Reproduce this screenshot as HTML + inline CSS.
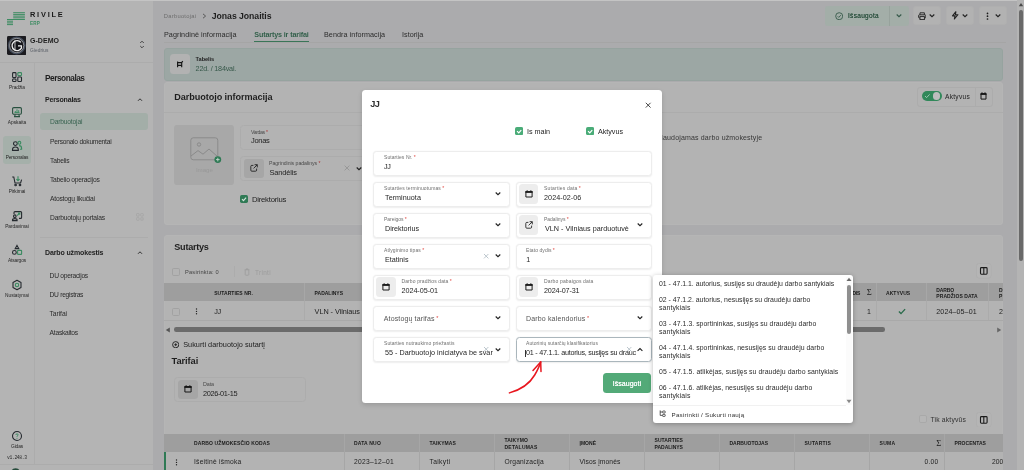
<!DOCTYPE html>
<html><head><meta charset="utf-8"><title>Rivile ERP</title>
<style>
*{box-sizing:border-box;margin:0;padding:0}
html,body{width:1024px;height:470px;overflow:hidden}
body{font-family:"Liberation Sans",sans-serif;background:#ababad;position:relative}
.a{position:absolute;display:block}
.t{position:absolute;white-space:nowrap}
#w{position:absolute;left:0;top:0;width:1024px;height:470px;overflow:hidden;will-change:transform}
</style></head><body>
<div id="w">
<div class="a" style="left:0px;top:0px;width:153px;height:470px;background:#b4b4b4;"></div>
<div class="a" style="left:0px;top:0px;width:1024px;height:1px;background:#c4c4c4;"></div>
<div class="a" style="left:0px;top:62px;width:153px;height:1px;background:#acacac;"></div>
<div class="a" style="left:34px;top:63px;width:1px;height:401px;background:#acacac;"></div>
<div class="a" style="left:0px;top:464px;width:153px;height:1px;background:#acacac;"></div>
<svg class="a" style="left:0px;top:0px;" width="30" height="30" viewBox="0 0 30 30"><rect x="13.2" y="12.2" width="11.7" height="1" fill="#3d8c62"/><rect x="13.2" y="13.9" width="11.7" height="1" fill="#3d8c62"/><rect x="13.2" y="15.6" width="11.7" height="1" fill="#3d8c62"/><rect x="13.2" y="17.3" width="11.7" height="1" fill="#3d8c62"/><rect x="7" y="19" width="17.9" height="1" fill="#3d8c62"/><rect x="7" y="20.7" width="6" height="1" fill="#3d8c62"/><rect x="7" y="22.4" width="6" height="1" fill="#3d8c62"/><rect x="7" y="24.1" width="6" height="1" fill="#3d8c62"/></svg>
<div class="t" style="left:30.00px;top:10px;font-size:7.4px;line-height:9px;color:#1a1a1a;font-weight:bold;letter-spacing:1.775px;">RIVILE</div>
<div class="t" style="left:30.00px;top:21px;font-size:4.6px;line-height:5px;color:#3d8c62;font-weight:bold;letter-spacing:0.180px;">ERP</div>
<svg class="a" style="left:7px;top:36px;" width="19.4" height="19" viewBox="0 0 19.4 19"><rect x="0" y="0" width="19.4" height="19" rx="1.5" fill="#1b1b1f"/><circle cx="9.7" cy="9.5" r="8.1" fill="none" stroke="#6f7f99" stroke-width="1.6" opacity=".5"/><circle cx="9.7" cy="9.5" r="7.1" fill="#15151a" stroke="#e0e0e0" stroke-width=".6"/><path d="M13.9 6.4A5 5 0 1 0 14.4 12.2V9.8H11" fill="none" stroke="#ededed" stroke-width="1.3"/><path d="M8 4.2V14.8" stroke="#ededed" stroke-width=".8"/></svg>
<div class="t" style="left:30.00px;top:37px;font-size:7px;line-height:7px;color:#1f1f1f;font-weight:bold;letter-spacing:0.037px;">G-DEMO</div>
<div class="t" style="left:30.00px;top:48px;font-size:4.8px;line-height:5px;color:#5b6068;letter-spacing:0.078px;">Giedrius</div>
<svg class="a" style="left:139px;top:38.5px;" width="6" height="11" viewBox="0 0 6 11"><path d="M1.2 4 3 2.2 4.8 4M1.2 7 3 8.8 4.8 7" fill="none" stroke="#2a2a2a" stroke-width=".8"/></svg>
<div class="a" style="left:3px;top:136px;width:28px;height:27.5px;background:#a5b0aa;border-radius:3px;"></div>
<div class="t" style="left:9.05px;top:85px;font-size:4.8px;line-height:5px;color:#262626;letter-spacing:-0.054px;">Pradžia</div>
<div class="t" style="left:7.80px;top:120px;font-size:4.8px;line-height:5px;color:#262626;letter-spacing:-0.001px;">Apskaita</div>
<div class="t" style="left:5.85px;top:155px;font-size:4.8px;line-height:5px;color:#262626;letter-spacing:-0.171px;">Personalas</div>
<div class="t" style="left:8.70px;top:189px;font-size:4.8px;line-height:5px;color:#262626;letter-spacing:-0.059px;">Pirkimai</div>
<div class="t" style="left:5.20px;top:224px;font-size:4.8px;line-height:5px;color:#262626;letter-spacing:-0.041px;">Pardavimai</div>
<div class="t" style="left:8.00px;top:258px;font-size:4.8px;line-height:5px;color:#262626;letter-spacing:-0.118px;">Atsargos</div>
<div class="t" style="left:5.10px;top:293px;font-size:4.8px;line-height:5px;color:#262626;letter-spacing:-0.021px;">Nustatymai</div>
<div class="t" style="left:11.05px;top:444px;font-size:4.8px;line-height:5px;color:#262626;letter-spacing:-0.128px;">Gidas</div>
<div class="t" style="left:7.00px;top:455px;font-size:4.7px;line-height:5px;color:#2c2c2c;font-family:'Liberation Mono',monospace;letter-spacing:-0.345px;">v1.248.3</div>
<svg class="a" style="left:11px;top:71px;" width="12" height="12" viewBox="-1 -1 12 12"><g fill="none" stroke-width="1.1"><rect x=".6" y=".6" width="3.4" height="5" rx=".8" stroke="#252a2f"/><rect x="5.8" y=".6" width="3.7" height="3" rx=".8" stroke="#3a8a60"/><rect x=".6" y="7" width="3.4" height="2.5" rx=".8" stroke="#252a2f"/><rect x="5.8" y="5" width="3.7" height="4.5" rx=".8" stroke="#252a2f"/></g></svg>
<svg class="a" style="left:11px;top:105.6px;" width="12" height="12" viewBox="-1 -1 12 12"><g fill="none" stroke-width="1.1"><rect x=".6" y=".6" width="8.8" height="6.6" rx="1.2" stroke="#28503f"/><path d="M2.6 9.6 3.2 7.4M7.4 9.6 6.8 7.4M2 9.6H8" stroke="#28503f"/><path d="M3.3 5.4V4M5 5.4V2.3M6.7 5.4V3.2M2.5 5.6H7.5" stroke="#3a8a60" stroke-width="1"/></g></svg>
<svg class="a" style="left:11px;top:140.3px;" width="12" height="12" viewBox="-1 -1 12 12"><g fill="none" stroke-width="1.1"><circle cx="3.4" cy="2.6" r="1.9" stroke="#252a2f"/><path d="M.5 9.4V8.4Q.5 6 3.4 6 6.3 6 6.3 8.4V9.4Z" stroke="#252a2f"/><circle cx="7.4" cy="1.8" r="1.4" stroke="#3a8a60"/><path d="M7 4.6Q9.6 4.6 9.6 7.2V8.2H8" stroke="#3a8a60"/></g></svg>
<svg class="a" style="left:11px;top:175px;" width="12" height="12" viewBox="-1 -1 12 12"><g fill="none" stroke-width="1.1"><path d="M.2 1H1.8L3 7H8.6L9.6 3.6" stroke="#252a2f"/><circle cx="3.6" cy="9" r=".8" stroke="#252a2f"/><circle cx="8" cy="9" r=".8" stroke="#252a2f"/><path d="M6 .2V4.6M4.4 3.2 6 4.8 7.6 3.2" stroke="#3a8a60"/></g></svg>
<svg class="a" style="left:11px;top:209.6px;" width="12" height="12" viewBox="-1 -1 12 12"><g fill="none" stroke-width="1.1"><path d="M2 3V1.6Q2 .6 3 .6H8.6Q9.6 .6 9.6 1.6V6.4Q9.6 7.4 8.6 7.4H7" stroke="#252a2f"/><circle cx="2.8" cy="5.2" r="1.3" stroke="#252a2f"/><path d="M.5 9.6V9Q.5 7.6 2.8 7.6 5.1 7.6 5.1 9V9.6Z" stroke="#252a2f"/><path d="M5 4.6 7.8 2M6 2H7.8V3.8" stroke="#3a8a60"/></g></svg>
<svg class="a" style="left:11px;top:244px;" width="12" height="12" viewBox="-1 -1 12 12"><g fill="none" stroke-width="1.1"><path d="M5 .4 6.8 3.6H3.2Z" stroke="#252a2f"/><circle cx="2.4" cy="7.4" r="1.9" stroke="#252a2f"/><rect x="5.6" y="5.4" width="4" height="4" rx=".7" stroke="#3a8a60"/></g></svg>
<svg class="a" style="left:11px;top:278.8px;" width="12" height="12" viewBox="-1 -1 12 12"><g fill="none" stroke-width="1.1"><path d="M5 .3 9 2.5V7.5L5 9.7 1 7.5V2.5Z" stroke="#252a2f" stroke-linejoin="round"/><circle cx="5" cy="5" r="1.7" stroke="#3a8a60"/></g></svg>
<svg class="a" style="left:11px;top:429.8px;" width="12" height="12" viewBox="-1 -1 12 12"><circle cx="5" cy="5" r="4.5" fill="none" stroke="#252a2f" stroke-width="1.1"/><path d="M3.9 4Q3.9 2.8 5 2.8 6.1 2.8 6.1 3.9 6.1 4.6 5 5.2V5.9" fill="none" stroke="#3a8a60" stroke-width=".9"/><circle cx="5" cy="7.2" r=".5" fill="#3a8a60"/></svg>
<svg class="a" style="left:11px;top:468px;" width="10" height="2" viewBox="0 0 10 2"><ellipse cx="4.6" cy="3.5" rx="4" ry="3.3" fill="#254a3a"/></svg>
<div class="t" style="left:45.00px;top:73px;font-size:8.3px;line-height:10px;color:#1e1e1e;font-weight:bold;letter-spacing:-0.479px;">Personalas</div>
<div class="t" style="left:45.00px;top:96px;font-size:7px;line-height:7px;color:#1e1e1e;font-weight:bold;letter-spacing:-0.176px;">Personalas</div>
<svg class="a" style="left:136.5px;top:96.5px;" width="6" height="5" viewBox="0 0 6 5"><path d="M1 3.8 3 1.8 5 3.8" fill="none" stroke="#222" stroke-width=".9"/></svg>
<div class="a" style="left:39.7px;top:113.3px;width:108.6px;height:17px;background:#a3aea8;border-radius:3px;"></div>
<div class="t" style="left:50.00px;top:118px;font-size:6.7px;line-height:7px;color:#386350;letter-spacing:-0.179px;">Darbuotojai</div>
<div class="t" style="left:50.00px;top:138px;font-size:6.7px;line-height:7px;color:#2b2b2b;letter-spacing:-0.259px;">Personalo dokumentai</div>
<div class="t" style="left:50.00px;top:157px;font-size:6.7px;line-height:7px;color:#2b2b2b;letter-spacing:-0.208px;">Tabelis</div>
<div class="t" style="left:50.00px;top:176px;font-size:6.7px;line-height:7px;color:#2b2b2b;letter-spacing:-0.224px;">Tabelio operacijos</div>
<div class="t" style="left:50.00px;top:195px;font-size:6.7px;line-height:7px;color:#2b2b2b;letter-spacing:-0.201px;">Atostogų likučiai</div>
<div class="t" style="left:50.00px;top:214px;font-size:6.7px;line-height:7px;color:#2b2b2b;letter-spacing:-0.183px;">Darbuotojų portalas</div>
<svg class="a" style="left:135.9px;top:212.5px;" width="8" height="8" viewBox="0 0 8 8"><g fill="none" stroke="#a5a5a5" stroke-width=".7"><rect x=".5" y=".5" width="2.7" height="2.7" rx=".8"/><rect x="4.6" y=".5" width="2.7" height="2.7" rx=".8"/><rect x=".5" y="4.6" width="2.7" height="2.7" rx=".8"/><rect x="4.6" y="4.6" width="2.7" height="2.7" rx=".8"/></g></svg>
<div class="a" style="left:39.7px;top:237px;width:108.6px;height:1px;background:#acacac;"></div>
<div class="t" style="left:45.00px;top:249px;font-size:7px;line-height:7px;color:#1e1e1e;font-weight:bold;letter-spacing:-0.125px;">Darbo užmokestis</div>
<svg class="a" style="left:136.5px;top:249.7px;" width="6" height="5" viewBox="0 0 6 5"><path d="M1 3.8 3 1.8 5 3.8" fill="none" stroke="#222" stroke-width=".9"/></svg>
<div class="t" style="left:49.60px;top:272px;font-size:6.7px;line-height:7px;color:#2b2b2b;letter-spacing:-0.283px;">DU operacijos</div>
<div class="t" style="left:49.60px;top:291px;font-size:6.7px;line-height:7px;color:#2b2b2b;letter-spacing:-0.303px;">DU registras</div>
<div class="t" style="left:49.60px;top:310px;font-size:6.7px;line-height:7px;color:#2b2b2b;letter-spacing:-0.068px;">Tarifai</div>
<div class="t" style="left:49.60px;top:329px;font-size:6.7px;line-height:7px;color:#2b2b2b;letter-spacing:-0.251px;">Ataskaitos</div>
<div class="t" style="left:163.80px;top:13px;font-size:5.8px;line-height:6px;color:#6e6e6e;letter-spacing:0.258px;">Darbuotojai</div>
<svg class="a" style="left:200.5px;top:12.5px;" width="6" height="6" viewBox="0 0 6 6"><path d="M2 .9 4.6 3.05 2 5.2" fill="none" stroke="#444" stroke-width=".8"/></svg>
<div class="t" style="left:211.80px;top:11px;font-size:8.7px;line-height:10px;color:#1e1e1e;font-weight:bold;letter-spacing:-0.046px;">Jonas Jonaitis</div>
<div class="t" style="left:164.00px;top:30px;font-size:7.2px;line-height:9px;color:#2b2b2b;letter-spacing:0.066px;">Pagrindinė informacija</div>
<div class="t" style="left:254.30px;top:30px;font-size:7.2px;line-height:9px;color:#33604b;font-weight:bold;letter-spacing:-0.143px;">Sutartys ir tarifai</div>
<div class="a" style="left:164px;top:41.7px;width:842px;height:0.8px;background:#a5a5a5;"></div>
<div class="a" style="left:254px;top:41.4px;width:55px;height:1.1px;background:#3a7558;"></div>
<div class="t" style="left:324.00px;top:30px;font-size:7.2px;line-height:9px;color:#2b2b2b;letter-spacing:0.070px;">Bendra informacija</div>
<div class="t" style="left:402.00px;top:30px;font-size:7.2px;line-height:9px;color:#2b2b2b;letter-spacing:0.024px;">Istorija</div>
<div class="a" style="left:825px;top:6px;width:84px;height:19.5px;background:#a3aea8;border-radius:3px;"></div>
<div class="a" style="left:888.5px;top:6px;width:1px;height:19.5px;background:#97a29c;"></div>
<svg class="a" style="left:834.5px;top:11.5px;" width="8.4" height="8.4" viewBox="0 0 8.4 8.4"><circle cx="4.2" cy="4.2" r="3.5" fill="none" stroke="#35594a" stroke-width=".9"/><path d="M2.7 4.3 3.8 5.4 5.8 3.2" fill="none" stroke="#35594a" stroke-width=".9"/></svg>
<div class="t" style="left:848.00px;top:12px;font-size:6.5px;line-height:7px;color:#2f5442;letter-spacing:0.313px;text-shadow:0 0 .4px #2f5442;">Išsaugota</div>
<svg class="a" style="left:896px;top:13.2px;" width="6" height="5" viewBox="0 0 6 5"><path d="M.7 1.5 3 3.7 5.3 1.5" fill="none" stroke="#35594a" stroke-width="1.1"/></svg>
<div class="a" style="left:913px;top:6px;width:28px;height:19px;background:#b2b2b2;border:1px solid #afafaf;border-radius:3px;"></div>
<div class="a" style="left:946px;top:6px;width:27.5px;height:19px;background:#b2b2b2;border:1px solid #afafaf;border-radius:3px;"></div>
<div class="a" style="left:979px;top:6px;width:28px;height:19px;background:#b2b2b2;border:1px solid #afafaf;border-radius:3px;"></div>
<svg class="a" style="left:917.5px;top:11.5px;" width="8.4" height="8.4" viewBox="0 0 8.4 8.4"><g fill="none" stroke="#222" stroke-width=".9"><path d="M2 2.8V.8H6.4V2.8"/><rect x=".6" y="2.8" width="7.2" height="3.2" rx=".8"/><rect x="2" y="4.6" width="4.4" height="3" fill="#b4b4b4"/></g></svg>
<svg class="a" style="left:929.3px;top:13.2px;" width="6" height="5" viewBox="0 0 6 5"><path d="M.7 1.5 3 3.7 5.3 1.5" fill="none" stroke="#222" stroke-width="1.1"/></svg>
<svg class="a" style="left:951.2px;top:11.3px;" width="8.4" height="8.8" viewBox="0 0 8.4 8.8"><path d="M4.9 .7 1.5 4.9H4L3.4 8 6.9 3.7H4.4Z" fill="none" stroke="#222" stroke-width="1.1" stroke-linejoin="round"/></svg>
<svg class="a" style="left:962.3px;top:13.2px;" width="6" height="5" viewBox="0 0 6 5"><path d="M.7 1.5 3 3.7 5.3 1.5" fill="none" stroke="#222" stroke-width="1.1"/></svg>
<svg class="a" style="left:986px;top:11.5px;" width="3" height="8.4" viewBox="0 0 3 8.4"><circle cx="1.5" cy="1.4" r=".85" fill="#1a1a1a"/><circle cx="1.5" cy="4.2" r=".85" fill="#1a1a1a"/><circle cx="1.5" cy="7" r=".85" fill="#1a1a1a"/></svg>
<svg class="a" style="left:994.8px;top:13.2px;" width="6" height="5" viewBox="0 0 6 5"><path d="M.7 1.5 3 3.7 5.3 1.5" fill="none" stroke="#222" stroke-width="1.1"/></svg>
<div class="a" style="left:164px;top:48px;width:839px;height:33px;background:#9ca7a4;border:1px solid #96a39f;border-radius:3px;"></div>
<div class="a" style="left:170px;top:54.3px;width:20px;height:20px;background:#b2b2b2;border-radius:3.5px;"></div>
<svg class="a" style="left:176px;top:60.2px;" width="8" height="8" viewBox="0 0 8 8"><g fill="none" stroke="#161616" stroke-width="1.15"><path d="M1.6 1.6V7.2M1.4 2.6H5.6L6.8 1.1M5.7 2.6V7.2M1.6 5.4H5.7"/></g></svg>
<div class="t" style="left:195.60px;top:56px;font-size:5.7px;line-height:6px;color:#242424;font-weight:bold;letter-spacing:-0.088px;">Tabelis</div>
<div class="t" style="left:195.60px;top:64px;font-size:7.2px;line-height:9px;color:#37594a;letter-spacing:-0.188px;">22d. / 184val.</div>
<div class="a" style="left:164px;top:81.6px;width:839px;height:143.4px;background:#b3b3b3;border:1px solid #b5b5b5;border-radius:3px;"></div>
<div class="t" style="left:174.30px;top:92px;font-size:9.1px;line-height:10px;color:#1e1e1e;font-weight:bold;letter-spacing:-0.064px;">Darbuotojo informacija</div>
<div class="a" style="left:164px;top:111.5px;width:839px;height:1px;background:#acacac;"></div>
<div class="a" style="left:917px;top:86.5px;width:75.5px;height:20px;background:#b3b3b3;border:1px solid #acacac;border-radius:3px;"></div>
<div class="a" style="left:922px;top:91px;width:20px;height:10px;background:#31885a;border-radius:5px;"></div>
<div class="a" style="left:932.5px;top:92.2px;width:7.6px;height:7.6px;background:#bdbdbd;border-radius:3.8px;"></div>
<svg class="a" style="left:924px;top:93px;" width="7" height="6" viewBox="0 0 7 6"><path d="M1 3 2.6 4.6 5.6 1.4" fill="none" stroke="#b9d6c6" stroke-width=".8"/></svg>
<div class="t" style="left:945.00px;top:93px;font-size:6.6px;line-height:7px;color:#1e1e1e;letter-spacing:0.270px;">Aktyvus</div>
<div class="a" style="left:974.5px;top:86.5px;width:1px;height:20px;background:#acacac;"></div>
<svg class="a" style="left:980.4px;top:92px;" width="7" height="8" viewBox="0 0 7 8"><path d="M1 1.7H6V7.1H1Z" fill="none" stroke="#161616" stroke-width="1" stroke-linejoin="round"/><rect x=".5" y="1.2" width="6" height="1.7" fill="#161616"/><rect x="1.5" y=".3" width="1" height="1.2" fill="#161616"/><rect x="4.5" y=".3" width="1" height="1.2" fill="#161616"/></svg>
<div class="a" style="left:174px;top:125px;width:60px;height:60px;background:#a8a8a8;border-radius:3px;"></div>
<svg class="a" style="left:189.5px;top:136.5px;" width="32" height="28" viewBox="0 0 32 28"><g fill="none" stroke="#8a8a8a" stroke-width="1"><rect x=".8" y=".8" width="27" height="22" rx="2.5"/><circle cx="9" cy="7.5" r="1.7"/><path d="M1 19 8 13.6 13 17.2 19 12 27.6 19.6"/></g><circle cx="27.8" cy="22.6" r="3.4" fill="#2f7a55"/><path d="M26 22.6H29.6M27.8 20.8V24.4" stroke="#c4d8cd" stroke-width=".9"/></svg>
<div class="t" style="left:195.90px;top:166px;font-size:6.2px;line-height:7px;color:#989898;letter-spacing:-0.046px;">Image</div>
<div class="a" style="left:240.2px;top:125.3px;width:200px;height:25px;background:#b3b3b3;border:1px solid #acacac;border-radius:3.5px;"></div>
<div class="t" style="left:251.00px;top:129px;font-size:5.2px;line-height:6px;color:#4a4a4a;letter-spacing:-0.382px;">Vardas</div>
<div class="t" style="left:266.00px;top:129px;font-size:5px;line-height:6px;color:#a33;">*</div>
<div class="t" style="left:251.00px;top:136px;font-size:7.5px;line-height:9px;color:#1e1e1e;letter-spacing:-0.303px;">Jonas</div>
<div class="a" style="left:240.2px;top:156.4px;width:200px;height:25px;background:#b3b3b3;border:1px solid #acacac;border-radius:3.5px;"></div>
<div class="a" style="left:244.3px;top:158.8px;width:19.4px;height:19.6px;background:#a6a6a6;border-radius:3px;"></div>
<svg class="a" style="left:249.8px;top:163.6px;" width="8" height="8" viewBox="0 0 8 8"><g fill="none" stroke="#1b1b1b" stroke-width=".85"><path d="M3.4 1.4H1.8Q.8 1.4 .8 2.4V6.2Q.8 7.2 1.8 7.2H5.6Q6.6 7.2 6.6 6.2V4.6"/><path d="M4.6 .7H7.3V3.4M7.2 .8 3.6 4.4"/></g></svg>
<div class="t" style="left:269.00px;top:160px;font-size:5.2px;line-height:6px;color:#4a4a4a;letter-spacing:-0.045px;">Pagrindinis padalinys</div>
<div class="t" style="left:318.60px;top:160px;font-size:5px;line-height:6px;color:#a33;">*</div>
<div class="t" style="left:269.50px;top:168px;font-size:7.4px;line-height:9px;color:#1e1e1e;letter-spacing:-0.136px;">Sandėlis</div>
<svg class="a" style="left:344px;top:165.4px;" width="6" height="6" viewBox="0 0 6 6"><path d="M.6 .6 5.4 5.4M5.4 .6 .6 5.4" stroke="#979797" stroke-width=".95"/></svg>
<svg class="a" style="left:355.5px;top:165.8px;" width="6" height="5" viewBox="0 0 6 5"><path d="M.7 1.5 3 3.7 5.3 1.5" fill="none" stroke="#222" stroke-width="1.1"/></svg>
<svg class="a" style="left:240.1px;top:195.1px;" width="8" height="8" viewBox="0 0 7.6 7.6"><rect x="0" y="0" width="7.6" height="7.6" rx="1.6" fill="#2f7a55"/><path d="M1.9 3.9 3.3 5.3 5.8 2.5" fill="none" stroke="#d3e3da" stroke-width="1.1"/></svg>
<div class="t" style="left:251.90px;top:195px;font-size:7.7px;line-height:9px;color:#1e1e1e;letter-spacing:-0.218px;">Direktorius</div>
<div class="t" style="left:657.80px;top:134px;font-size:7px;line-height:7px;color:#363636;letter-spacing:0.161px;">Naudojamas darbo užmokestyje</div>
<div class="a" style="left:164px;top:235.4px;width:839px;height:240px;background:#b3b3b3;border:1px solid #b5b5b5;border-radius:3px;"></div>
<div class="t" style="left:174.30px;top:242px;font-size:9.1px;line-height:10px;color:#1e1e1e;font-weight:bold;letter-spacing:-0.252px;">Sutartys</div>
<div class="a" style="left:172px;top:268px;width:8px;height:8px;border:1px solid #a2a2a2;border-radius:1.6px;"></div>
<div class="t" style="left:185.00px;top:269px;font-size:5.7px;line-height:6px;color:#444;letter-spacing:0.203px;">Pasirinkta: 0</div>
<div class="a" style="left:234.4px;top:266px;width:1px;height:11px;background:#acacac;"></div>
<svg class="a" style="left:243.8px;top:268px;" width="6" height="8" viewBox="0 0 6 8"><g fill="none" stroke="#9a9a9a" stroke-width=".7"><path d="M.6 1.8H5.4M2.2 1.8V.8H3.8V1.8M1.2 1.8V6.6Q1.2 7.2 1.8 7.2H4.2Q4.8 7.2 4.8 6.6V1.8"/></g></svg>
<div class="t" style="left:255.00px;top:269px;font-size:6.4px;line-height:7px;color:#9c9c9c;letter-spacing:0.336px;">Trinti</div>
<svg class="a" style="left:976px;top:263.4px;" width="15.6" height="15.6" viewBox="0 0 15.6 15.6"><rect x=".4" y=".4" width="14.8" height="14.8" rx="3" fill="#b5b5b5" stroke="#adadad" stroke-width=".8"/><rect x="4.5" y="4.6" width="6.6" height="6.6" rx=".9" fill="none" stroke="#1b1b1b" stroke-width="1.1"/><path d="M7.8 4.8V11" stroke="#1b1b1b" stroke-width="1.1"/></svg>
<div class="a" style="left:164px;top:283.3px;width:839px;height:17.5px;background:#9e9e9e;"></div>
<div class="t" style="left:214.20px;top:290px;font-size:5px;line-height:6px;color:#1b1b1b;font-weight:bold;letter-spacing:0.064px;">SUTARTIES NR.</div>
<div class="t" style="left:314.60px;top:290px;font-size:5px;line-height:6px;color:#1b1b1b;font-weight:bold;letter-spacing:-0.013px;">PADALINYS</div>
<div class="a" style="left:304px;top:283px;width:1px;height:18px;background:#a7a7a7;"></div>
<div class="a" style="left:304px;top:301px;width:1px;height:19px;background:#ababab;"></div>
<div class="a" style="left:875.6px;top:283px;width:1px;height:18px;background:#a7a7a7;"></div>
<div class="a" style="left:875.6px;top:301px;width:1px;height:19px;background:#ababab;"></div>
<div class="a" style="left:925.8px;top:283px;width:1px;height:18px;background:#a7a7a7;"></div>
<div class="a" style="left:925.8px;top:301px;width:1px;height:19px;background:#ababab;"></div>
<div class="a" style="left:988px;top:283px;width:1px;height:18px;background:#a7a7a7;"></div>
<div class="a" style="left:988px;top:301px;width:1px;height:19px;background:#ababab;"></div>
<div class="a" style="left:164px;top:320px;width:839px;height:1px;background:#a9a9a9;"></div>
<div class="t" style="left:852.60px;top:290px;font-size:5px;line-height:6px;color:#1b1b1b;font-weight:bold;letter-spacing:-0.312px;">DIS</div>
<div class="t" style="left:866.70px;top:287px;font-size:8.6px;line-height:10px;color:#1b1b1b;font-family:'Liberation Serif',serif;">Σ</div>
<div class="t" style="left:886.00px;top:290px;font-size:5px;line-height:6px;color:#1b1b1b;font-weight:bold;letter-spacing:0.044px;">AKTYVUS</div>
<div class="t" style="left:936.30px;top:287px;font-size:5px;line-height:6px;color:#1b1b1b;font-weight:bold;letter-spacing:-0.147px;">DARBO</div>
<div class="t" style="left:936.30px;top:293px;font-size:5px;line-height:6px;color:#1b1b1b;font-weight:bold;letter-spacing:0.087px;">PRADŽIOS DATA</div>
<div class="t" style="left:999.00px;top:287px;font-size:5px;line-height:6px;color:#1b1b1b;font-weight:bold;letter-spacing:-0.111px;">D</div>
<div class="t" style="left:999.00px;top:293px;font-size:5px;line-height:6px;color:#1b1b1b;font-weight:bold;letter-spacing:0.065px;">P</div>
<div class="a" style="left:172px;top:308.2px;width:8px;height:8px;border:1px solid #a2a2a2;border-radius:1.6px;"></div>
<svg class="a" style="left:195px;top:308.4px;" width="3" height="7" viewBox="0 0 3 7"><circle cx="1.5" cy="1" r=".7" fill="#222"/><circle cx="1.5" cy="3.4" r=".7" fill="#222"/><circle cx="1.5" cy="5.8" r=".7" fill="#222"/></svg>
<div class="t" style="left:214.20px;top:307px;font-size:7.3px;line-height:9px;color:#1e1e1e;letter-spacing:-0.250px;">JJ</div>
<div class="t" style="left:314.60px;top:307px;font-size:7.3px;line-height:9px;color:#1e1e1e;letter-spacing:-0.052px;">VLN - Vilniaus</div>
<div class="t" style="left:867.00px;top:308px;font-size:7px;line-height:7px;color:#1e1e1e;">1</div>
<svg class="a" style="left:898.3px;top:307.6px;" width="8" height="7" viewBox="0 0 8 7"><path d="M.9 3.6 3 5.6 7.1 1.1" fill="none" stroke="#2a6b4b" stroke-width="1.35"/></svg>
<div class="t" style="left:936.30px;top:308px;font-size:7.1px;line-height:8px;color:#1e1e1e;letter-spacing:0.101px;">2024–05–01</div>
<div class="t" style="left:999.00px;top:308px;font-size:7.1px;line-height:8px;color:#1e1e1e;">2</div>
<svg class="a" style="left:165.3px;top:326.6px;" width="6" height="6" viewBox="0 0 6 6"><path d="M4.8 .5V5.5L.8 3Z" fill="#555"/></svg>
<div class="a" style="left:173.5px;top:327.4px;width:711.5px;height:4.4px;background:#6b6b6b;border-radius:2.2px;"></div>
<svg class="a" style="left:995.6px;top:326.6px;" width="6" height="6" viewBox="0 0 6 6"><path d="M1.2 .5V5.5L5.2 3Z" fill="#666"/></svg>
<svg class="a" style="left:172px;top:341px;" width="7.4" height="7.4" viewBox="0 0 7.4 7.4"><circle cx="3.7" cy="3.7" r="3.1" fill="none" stroke="#1e1e1e" stroke-width=".9"/><path d="M3.7 2.3V5.1M2.3 3.7H5.1" stroke="#1e1e1e" stroke-width=".9"/></svg>
<div class="t" style="left:183.20px;top:340px;font-size:7.3px;line-height:9px;color:#1c1c1c;letter-spacing:0.025px;">Sukurti darbuotojo sutartį</div>
<div class="t" style="left:171.60px;top:356px;font-size:9.3px;line-height:10px;color:#1e1e1e;font-weight:bold;letter-spacing:-0.088px;">Tarifai</div>
<div class="a" style="left:174.2px;top:377px;width:132.2px;height:24.6px;background:#b3b3b3;border:1px solid #acacac;border-radius:3.5px;"></div>
<div class="a" style="left:178px;top:379.6px;width:19.6px;height:19.5px;background:#a6a6a6;border-radius:3.5px;"></div>
<svg class="a" style="left:183.9px;top:385.2px;" width="8" height="8" viewBox="0 0 8 8"><path d="M.9 1.6H7.1V7H.9Z" fill="none" stroke="#161616" stroke-width="1"/><rect x=".4" y="1" width="7.2" height="1.9" fill="#161616"/><rect x="1.6" y=".3" width="1.1" height="1" fill="#161616"/><rect x="5.3" y=".3" width="1.1" height="1" fill="#161616"/></svg>
<div class="t" style="left:203.00px;top:381px;font-size:5.4px;line-height:6px;color:#4a4a4a;letter-spacing:-0.102px;">Data</div>
<div class="t" style="left:203.00px;top:389px;font-size:7.4px;line-height:9px;color:#1e1e1e;letter-spacing:-0.365px;">2026-01-15</div>
<div class="a" style="left:918.8px;top:415.2px;width:7.8px;height:7.8px;background:#b6b6b6;border:1px solid #a9a9a9;border-radius:1.8px;"></div>
<div class="t" style="left:930.50px;top:416px;font-size:6.8px;line-height:7px;color:#333;letter-spacing:0.159px;">Tik aktyvūs</div>
<svg class="a" style="left:976px;top:411.5px;" width="15.6" height="15.6" viewBox="0 0 15.6 15.6"><rect x=".4" y=".4" width="14.8" height="14.8" rx="3" fill="#b5b5b5" stroke="#adadad" stroke-width=".8"/><rect x="4.5" y="4.6" width="6.6" height="6.6" rx=".9" fill="none" stroke="#1b1b1b" stroke-width="1.1"/><path d="M7.8 4.8V11" stroke="#1b1b1b" stroke-width="1.1"/></svg>
<div class="a" style="left:164px;top:434px;width:839px;height:18px;background:#9e9e9e;"></div>
<div class="a" style="left:164px;top:452px;width:839px;height:18px;background:#b3b3b3;"></div>
<div class="a" style="left:164px;top:452px;width:1.6px;height:18px;background:#2f7a55;"></div>
<div class="t" style="left:194.00px;top:440px;font-size:5px;line-height:6px;color:#1b1b1b;font-weight:bold;letter-spacing:0.134px;">DARBO UŽMOKESČIO KODAS</div>
<div class="t" style="left:354.00px;top:440px;font-size:5px;line-height:6px;color:#1b1b1b;font-weight:bold;letter-spacing:0.193px;">DATA NUO</div>
<div class="t" style="left:429.50px;top:440px;font-size:5px;line-height:6px;color:#1b1b1b;font-weight:bold;letter-spacing:0.095px;">TAIKYMAS</div>
<div class="t" style="left:579.50px;top:440px;font-size:5px;line-height:6px;color:#1b1b1b;font-weight:bold;letter-spacing:0.022px;">ĮMONĖ</div>
<div class="t" style="left:729.50px;top:440px;font-size:5px;line-height:6px;color:#1b1b1b;font-weight:bold;letter-spacing:-0.002px;">DARBUOTOJAS</div>
<div class="t" style="left:804.50px;top:440px;font-size:5px;line-height:6px;color:#1b1b1b;font-weight:bold;letter-spacing:0.234px;">SUTARTIS</div>
<div class="t" style="left:879.50px;top:440px;font-size:5px;line-height:6px;color:#1b1b1b;font-weight:bold;letter-spacing:0.319px;">SUMA</div>
<div class="t" style="left:954.50px;top:440px;font-size:5px;line-height:6px;color:#1b1b1b;font-weight:bold;letter-spacing:0.053px;">PROCENTAS</div>
<div class="t" style="left:504.50px;top:437px;font-size:5px;line-height:6px;color:#1b1b1b;font-weight:bold;letter-spacing:0.117px;">TAIKYMO</div>
<div class="t" style="left:504.50px;top:444px;font-size:5px;line-height:6px;color:#1b1b1b;font-weight:bold;letter-spacing:0.220px;">DETALUMAS</div>
<div class="t" style="left:654.50px;top:437px;font-size:5px;line-height:6px;color:#1b1b1b;font-weight:bold;letter-spacing:0.059px;">SUTARTIES</div>
<div class="t" style="left:654.50px;top:444px;font-size:5px;line-height:6px;color:#1b1b1b;font-weight:bold;letter-spacing:-0.013px;">PADALINYS</div>
<div class="t" style="left:936.20px;top:438px;font-size:8.6px;line-height:10px;color:#1b1b1b;font-family:'Liberation Serif',serif;">Σ</div>
<div class="a" style="left:344px;top:434px;width:1px;height:36px;background:#a6a6a6;"></div>
<div class="a" style="left:419px;top:434px;width:1px;height:36px;background:#a6a6a6;"></div>
<div class="a" style="left:494px;top:434px;width:1px;height:36px;background:#a6a6a6;"></div>
<div class="a" style="left:569px;top:434px;width:1px;height:36px;background:#a6a6a6;"></div>
<div class="a" style="left:644px;top:434px;width:1px;height:36px;background:#a6a6a6;"></div>
<div class="a" style="left:719px;top:434px;width:1px;height:36px;background:#a6a6a6;"></div>
<div class="a" style="left:794px;top:434px;width:1px;height:36px;background:#a6a6a6;"></div>
<div class="a" style="left:869px;top:434px;width:1px;height:36px;background:#a6a6a6;"></div>
<div class="a" style="left:943.5px;top:434px;width:1px;height:36px;background:#a6a6a6;"></div>
<svg class="a" style="left:174.5px;top:458.5px;" width="3" height="7" viewBox="0 0 3 7"><circle cx="1.5" cy="1" r=".7" fill="#222"/><circle cx="1.5" cy="3.4" r=".7" fill="#222"/><circle cx="1.5" cy="5.8" r=".7" fill="#222"/></svg>
<div class="t" style="left:194.00px;top:458px;font-size:6.7px;line-height:7px;color:#1e1e1e;letter-spacing:0.212px;">Išeitinė išmoka</div>
<div class="t" style="left:354.00px;top:458px;font-size:6.7px;line-height:7px;color:#1e1e1e;letter-spacing:0.274px;">2023–12–01</div>
<div class="t" style="left:429.50px;top:458px;font-size:6.7px;line-height:7px;color:#1e1e1e;letter-spacing:0.341px;">Taikyti</div>
<div class="t" style="left:504.50px;top:458px;font-size:6.7px;line-height:7px;color:#1e1e1e;letter-spacing:0.188px;">Organizacija</div>
<div class="t" style="left:579.50px;top:458px;font-size:6.7px;line-height:7px;color:#1e1e1e;letter-spacing:0.106px;">Visos įmonės</div>
<div class="t" style="left:924.50px;top:458px;font-size:6.7px;line-height:7px;color:#1e1e1e;letter-spacing:0.240px;">0.00</div>
<div class="a" style="left:992px;top:455px;width:11px;height:14px;overflow:hidden"><div class="t" style="left:0;top:2.6px;font-size:6.7px;line-height:8px;color:#1e1e1e">200</div></div>
<div class="a" style="left:1007px;top:0px;width:17px;height:470px;background:#ababad;"></div>
<div class="a" style="left:1017.3px;top:0px;width:6.7px;height:470px;background:#b4b4b4;"></div>
<div class="a" style="left:1019.2px;top:9.5px;width:3.8px;height:251.5px;background:#696969;border-radius:1.9px;"></div>
<svg class="a" style="left:1018px;top:1.5px;" width="6" height="5" viewBox="0 0 6 5"><path d="M.8 4.2 3 1 5.2 4.2Z" fill="#4a4a4a"/></svg>
<div class="a" style="left:0px;top:0px;width:1017px;height:1px;background:#c4c4c4;"></div>
<div class="a" style="left:362px;top:90px;width:300px;height:313px;background:#fff;border-radius:3.5px;box-shadow:0 2px 5px rgba(0,0,0,.14)"></div>
<div class="t" style="left:370.30px;top:99px;font-size:9.2px;line-height:10px;color:#2e2e2e;font-weight:bold;letter-spacing:-0.717px;">JJ</div>
<svg class="a" style="left:645.3px;top:101.5px;" width="6.4" height="6.4" viewBox="0 0 6.4 6.4"><path d="M.8 .8 5.6 5.6M5.6 .8 .8 5.6" stroke="#333" stroke-width=".9"/></svg>
<svg class="a" style="left:515.2px;top:127.2px;" width="8.2" height="8.2" viewBox="0 0 7.6 7.6"><rect x="0" y="0" width="7.6" height="7.6" rx="1.7" fill="#4aac78"/><path d="M1.9 3.8 3.5 5.4 5.8 2.9" fill="none" stroke="#fff" stroke-width="1.15"/></svg>
<div class="t" style="left:527.00px;top:127px;font-size:7.2px;line-height:9px;color:#262626;letter-spacing:-0.030px;">Is main</div>
<svg class="a" style="left:586px;top:127.2px;" width="8.2" height="8.2" viewBox="0 0 7.6 7.6"><rect x="0" y="0" width="7.6" height="7.6" rx="1.7" fill="#4aac78"/><path d="M1.9 3.8 3.5 5.4 5.8 2.9" fill="none" stroke="#fff" stroke-width="1.15"/></svg>
<div class="t" style="left:598.00px;top:127px;font-size:7.2px;line-height:9px;color:#262626;letter-spacing:-0.030px;">Aktyvus</div>
<div class="a" style="left:373px;top:150.5px;width:279px;height:25px;background:#fff;border:1px solid #ededed;border-radius:3.5px;box-shadow:0 .6px 1.6px rgba(0,0,0,.07);"></div>
<div class="t" style="left:384.00px;top:154px;font-size:5px;line-height:6px;color:#707070;letter-spacing:0.076px;">Sutarties Nr.</div>
<div class="t" style="left:413.70px;top:154px;font-size:5px;line-height:6px;color:#e0443e;">*</div>
<div class="t" style="left:384.00px;top:162px;font-size:7.2px;line-height:9px;color:#262626;letter-spacing:-0.350px;">JJ</div>
<div class="a" style="left:373px;top:181.5px;width:136.5px;height:25px;background:#fff;border:1px solid #ededed;border-radius:3.5px;box-shadow:0 .6px 1.6px rgba(0,0,0,.07);"></div>
<div class="t" style="left:384.00px;top:185px;font-size:5px;line-height:6px;color:#707070;letter-spacing:0.122px;">Sutarties terminuotumas</div>
<div class="t" style="left:442.20px;top:185px;font-size:5px;line-height:6px;color:#e0443e;">*</div>
<div class="t" style="left:385.00px;top:193px;font-size:7.2px;line-height:9px;color:#262626;letter-spacing:0.038px;">Terminuota</div>
<svg class="a" style="left:495px;top:191.4px;" width="6" height="5" viewBox="0 0 6 5"><path d="M.7 1.5 3 3.7 5.3 1.5" fill="none" stroke="#222" stroke-width="1.1"/></svg>
<div class="a" style="left:515.5px;top:181.5px;width:136.5px;height:25px;background:#fff;border:1px solid #ededed;border-radius:3.5px;box-shadow:0 .6px 1.6px rgba(0,0,0,.07);"></div>
<div class="a" style="left:518.7px;top:184.4px;width:19.5px;height:19.4px;background:#ededed;border-radius:3.5px;"></div>
<svg class="a" style="left:524.5px;top:190.1px;" width="8" height="8" viewBox="0 0 8 8"><path d="M.9 1.6H7.1V7H.9Z" fill="none" stroke="#1d1d1d" stroke-width="1"/><rect x=".4" y="1" width="7.2" height="1.9" fill="#1d1d1d"/><rect x="1.6" y=".3" width="1.1" height="1" fill="#1d1d1d"/><rect x="5.3" y=".3" width="1.1" height="1" fill="#1d1d1d"/></svg>
<div class="t" style="left:544.00px;top:185px;font-size:5px;line-height:6px;color:#707070;letter-spacing:0.189px;">Sutarties data</div>
<div class="t" style="left:578.70px;top:185px;font-size:5px;line-height:6px;color:#e0443e;">*</div>
<div class="t" style="left:544.00px;top:193px;font-size:7.2px;line-height:9px;color:#262626;letter-spacing:0.067px;">2024-02-06</div>
<div class="a" style="left:373px;top:212.5px;width:136.5px;height:25px;background:#fff;border:1px solid #ededed;border-radius:3.5px;box-shadow:0 .6px 1.6px rgba(0,0,0,.07);"></div>
<div class="t" style="left:384.00px;top:216px;font-size:5px;line-height:6px;color:#707070;letter-spacing:-0.029px;">Pareigos</div>
<div class="t" style="left:404.70px;top:216px;font-size:5px;line-height:6px;color:#e0443e;">*</div>
<div class="t" style="left:385.00px;top:224px;font-size:7.2px;line-height:9px;color:#262626;letter-spacing:-0.037px;">Direktorius</div>
<svg class="a" style="left:495px;top:222.4px;" width="6" height="5" viewBox="0 0 6 5"><path d="M.7 1.5 3 3.7 5.3 1.5" fill="none" stroke="#222" stroke-width="1.1"/></svg>
<div class="a" style="left:515.5px;top:212.5px;width:136.5px;height:25px;background:#fff;border:1px solid #ededed;border-radius:3.5px;box-shadow:0 .6px 1.6px rgba(0,0,0,.07);"></div>
<div class="a" style="left:518.7px;top:215.4px;width:19.5px;height:19.4px;background:#ededed;border-radius:3.5px;"></div>
<svg class="a" style="left:524.7px;top:221.4px;" width="8" height="8" viewBox="0 0 8 8"><g fill="none" stroke="#1b1b1b" stroke-width=".85"><path d="M3.4 1.4H1.8Q.8 1.4 .8 2.4V6.2Q.8 7.2 1.8 7.2H5.6Q6.6 7.2 6.6 6.2V4.6"/><path d="M4.6 .7H7.3V3.4M7.2 .8 3.6 4.4"/></g></svg>
<div class="t" style="left:544.00px;top:216px;font-size:5px;line-height:6px;color:#707070;letter-spacing:-0.020px;">Padalinys</div>
<div class="t" style="left:566.70px;top:216px;font-size:5px;line-height:6px;color:#e0443e;">*</div>
<div class="t" style="left:545.00px;top:224px;font-size:7.2px;line-height:9px;color:#262626;letter-spacing:0.019px;">VLN - Vilniaus parduotuvė</div>
<svg class="a" style="left:637.3px;top:222.4px;" width="6" height="5" viewBox="0 0 6 5"><path d="M.7 1.5 3 3.7 5.3 1.5" fill="none" stroke="#222" stroke-width="1.1"/></svg>
<div class="a" style="left:373px;top:243.5px;width:136.5px;height:25px;background:#fff;border:1px solid #ededed;border-radius:3.5px;box-shadow:0 .6px 1.6px rgba(0,0,0,.07);"></div>
<div class="t" style="left:384.00px;top:247px;font-size:5px;line-height:6px;color:#707070;letter-spacing:0.124px;">Atlyginimo tipas</div>
<div class="t" style="left:422.20px;top:247px;font-size:5px;line-height:6px;color:#e0443e;">*</div>
<div class="t" style="left:385.00px;top:255px;font-size:7.2px;line-height:9px;color:#262626;letter-spacing:-0.014px;">Etatinis</div>
<svg class="a" style="left:483.3px;top:252.7px;" width="6.4" height="6.4" viewBox="0 0 6.4 6.4"><path d="M1 1 5.4 5.4M5.4 1 1 5.4" stroke="#b4bfc7" stroke-width=".9"/></svg>
<svg class="a" style="left:495px;top:253.4px;" width="6" height="5" viewBox="0 0 6 5"><path d="M.7 1.5 3 3.7 5.3 1.5" fill="none" stroke="#222" stroke-width="1.1"/></svg>
<div class="a" style="left:515.5px;top:243.5px;width:136.5px;height:25px;background:#fff;border:1px solid #ededed;border-radius:3.5px;box-shadow:0 .6px 1.6px rgba(0,0,0,.07);"></div>
<div class="t" style="left:526.00px;top:247px;font-size:5px;line-height:6px;color:#707070;letter-spacing:0.069px;">Etato dydis</div>
<div class="t" style="left:552.70px;top:247px;font-size:5px;line-height:6px;color:#e0443e;">*</div>
<div class="t" style="left:526.30px;top:255px;font-size:7.2px;line-height:9px;color:#262626;">1</div>
<div class="a" style="left:373px;top:274.5px;width:136.5px;height:25px;background:#fff;border:1px solid #ededed;border-radius:3.5px;box-shadow:0 .6px 1.6px rgba(0,0,0,.07);"></div>
<div class="a" style="left:376.2px;top:277.4px;width:19.5px;height:19.4px;background:#ededed;border-radius:3.5px;"></div>
<svg class="a" style="left:382px;top:283.1px;" width="8" height="8" viewBox="0 0 8 8"><path d="M.9 1.6H7.1V7H.9Z" fill="none" stroke="#1d1d1d" stroke-width="1"/><rect x=".4" y="1" width="7.2" height="1.9" fill="#1d1d1d"/><rect x="1.6" y=".3" width="1.1" height="1" fill="#1d1d1d"/><rect x="5.3" y=".3" width="1.1" height="1" fill="#1d1d1d"/></svg>
<div class="t" style="left:401.50px;top:278px;font-size:5px;line-height:6px;color:#707070;letter-spacing:0.104px;">Darbo pradžios data</div>
<div class="t" style="left:449.70px;top:278px;font-size:5px;line-height:6px;color:#e0443e;">*</div>
<div class="t" style="left:401.50px;top:286px;font-size:7.2px;line-height:9px;color:#262626;letter-spacing:-0.033px;">2024-05-01</div>
<div class="a" style="left:515.5px;top:274.5px;width:136.5px;height:25px;background:#fff;border:1px solid #ededed;border-radius:3.5px;box-shadow:0 .6px 1.6px rgba(0,0,0,.07);"></div>
<div class="a" style="left:518.7px;top:277.4px;width:19.5px;height:19.4px;background:#ededed;border-radius:3.5px;"></div>
<svg class="a" style="left:524.5px;top:283.1px;" width="8" height="8" viewBox="0 0 8 8"><path d="M.9 1.6H7.1V7H.9Z" fill="none" stroke="#1d1d1d" stroke-width="1"/><rect x=".4" y="1" width="7.2" height="1.9" fill="#1d1d1d"/><rect x="1.6" y=".3" width="1.1" height="1" fill="#1d1d1d"/><rect x="5.3" y=".3" width="1.1" height="1" fill="#1d1d1d"/></svg>
<div class="t" style="left:544.00px;top:278px;font-size:5px;line-height:6px;color:#707070;letter-spacing:0.162px;">Darbo pabaigos data</div>
<div class="t" style="left:544.00px;top:286px;font-size:7.2px;line-height:9px;color:#262626;letter-spacing:-0.133px;">2024-07-31</div>
<div class="a" style="left:373px;top:305.5px;width:136.5px;height:25px;background:#fff;border:1px solid #ededed;border-radius:3.5px;box-shadow:0 .6px 1.6px rgba(0,0,0,.07);"></div>
<div class="t" style="left:383.80px;top:315px;font-size:7px;line-height:7px;color:#555;letter-spacing:0.135px;">Atostogų tarifas</div>
<div class="t" style="left:436.20px;top:315px;font-size:5.4px;line-height:6px;color:#e0443e;">*</div>
<svg class="a" style="left:495px;top:315.4px;" width="6" height="5" viewBox="0 0 6 5"><path d="M.7 1.5 3 3.7 5.3 1.5" fill="none" stroke="#222" stroke-width="1.1"/></svg>
<div class="a" style="left:515.5px;top:305.5px;width:136.5px;height:25px;background:#fff;border:1px solid #ededed;border-radius:3.5px;box-shadow:0 .6px 1.6px rgba(0,0,0,.07);"></div>
<div class="t" style="left:526.00px;top:315px;font-size:7px;line-height:7px;color:#555;letter-spacing:0.158px;">Darbo kalendorius</div>
<div class="t" style="left:587.00px;top:315px;font-size:5.4px;line-height:6px;color:#e0443e;">*</div>
<svg class="a" style="left:637.3px;top:315.4px;" width="6" height="5" viewBox="0 0 6 5"><path d="M.7 1.5 3 3.7 5.3 1.5" fill="none" stroke="#222" stroke-width="1.1"/></svg>
<div class="a" style="left:373px;top:336.5px;width:136.5px;height:25px;background:#fff;border:1px solid #ededed;border-radius:3.5px;box-shadow:0 .6px 1.6px rgba(0,0,0,.07);"></div>
<div class="t" style="left:384.00px;top:340px;font-size:5px;line-height:6px;color:#707070;letter-spacing:0.069px;">Sutarties nutraukimo priežastis</div>
<div class="t" style="left:385.00px;top:348px;font-size:7.2px;line-height:9px;color:#262626;letter-spacing:0.034px;">55 - Darbuotojo iniciatyva be svar</div>
<svg class="a" style="left:483.3px;top:346.09999999999997px;" width="6.4" height="6.4" viewBox="0 0 6.4 6.4"><path d="M1 1 5.4 5.4M5.4 1 1 5.4" stroke="#b4bfc7" stroke-width=".9"/></svg>
<svg class="a" style="left:495.2px;top:347.0px;" width="6" height="5" viewBox="0 0 6 5"><path d="M.7 1.5 3 3.7 5.3 1.5" fill="none" stroke="#222" stroke-width="1.1"/></svg>
<div class="a" style="left:515.5px;top:336.5px;width:136.5px;height:25px;background:#fff;border:1px solid #aab6bc;border-radius:3.5px;box-shadow:0 .6px 1.6px rgba(0,0,0,.07);"></div>
<div class="t" style="left:526.00px;top:340px;font-size:5px;line-height:6px;color:#707070;letter-spacing:0.058px;">Autorinių sutarčių klasifikatorius</div>
<div class="a" style="left:525px;top:350.1px;width:0.7px;height:7px;background:#333;"></div>
<div class="t" style="left:526.00px;top:348px;font-size:7.2px;line-height:9px;color:#262626;letter-spacing:-0.248px;">01 - 47.1.1. autorius, susijęs su drauc</div>
<svg class="a" style="left:625.5px;top:346.09999999999997px;" width="6.4" height="6.4" viewBox="0 0 6.4 6.4"><path d="M1 1 5.4 5.4M5.4 1 1 5.4" stroke="#b4bfc7" stroke-width=".9"/></svg>
<svg class="a" style="left:637.4px;top:347.1px;" width="6" height="5" viewBox="0 0 6 5"><path d="M.6 3.8 3 1.5 5.4 3.8" fill="none" stroke="#222" stroke-width="1.1"/></svg>
<div class="a" style="left:602.8px;top:373px;width:48.5px;height:20px;background:#53aa78;border-radius:3.5px;"></div>
<div class="t" style="left:612.80px;top:380px;font-size:7.1px;line-height:8px;color:#fff;letter-spacing:-0.024px;text-shadow:0 0 .3px #fff;">Išsaugoti</div>
<svg class="a" style="left:505px;top:358px;" width="42" height="38" viewBox="0 0 42 38"><g fill="none" stroke="#e8161e" stroke-width="1.5" stroke-linecap="round" stroke-linejoin="round"><path d="M4.4 34.9C14 32.2 24.5 26 29.7 17 32.6 12 34.6 8 35.7 4"/><path d="M28 12.4 35.7 3.9 36 13.4"/></g></svg>
<div class="a" style="left:653px;top:275px;width:200px;height:148.4px;background:#fff;border-radius:3px;box-shadow:0 1px 5px rgba(0,0,0,.28)"></div>
<div class="t" style="left:659.00px;top:280px;font-size:6.9px;line-height:7px;color:#2d2d2d;letter-spacing:-0.009px;">01 - 47.1.1. autorius, susijęs su draudėju darbo santykiais</div>
<div class="t" style="left:659.00px;top:296px;font-size:6.9px;line-height:7px;color:#2d2d2d;letter-spacing:-0.000px;">02 - 47.1.2. autorius, nesusijęs su draudėju darbo</div>
<div class="t" style="left:659.00px;top:304px;font-size:6.9px;line-height:7px;color:#2d2d2d;letter-spacing:0.130px;">santykiais</div>
<div class="t" style="left:659.00px;top:320px;font-size:6.9px;line-height:7px;color:#2d2d2d;letter-spacing:0.027px;">03 - 47.1.3. sportininkas, susijęs su draudėju darbo</div>
<div class="t" style="left:659.00px;top:328px;font-size:6.9px;line-height:7px;color:#2d2d2d;letter-spacing:0.130px;">santykiais</div>
<div class="t" style="left:659.00px;top:344px;font-size:6.9px;line-height:7px;color:#2d2d2d;letter-spacing:0.032px;">04 - 47.1.4. sportininkas, nesusijęs su draudėju darbo</div>
<div class="t" style="left:659.00px;top:352px;font-size:6.9px;line-height:7px;color:#2d2d2d;letter-spacing:0.130px;">santykiais</div>
<div class="t" style="left:659.00px;top:368px;font-size:6.9px;line-height:7px;color:#2d2d2d;letter-spacing:0.051px;">05 - 47.1.5. atlikėjas, susijęs su draudėju darbo santykiais</div>
<div class="t" style="left:659.00px;top:384px;font-size:6.9px;line-height:7px;color:#2d2d2d;letter-spacing:0.031px;">06 - 47.1.6. atlikėjas, nesusijęs su draudėju darbo</div>
<div class="t" style="left:659.00px;top:392px;font-size:6.9px;line-height:7px;color:#2d2d2d;letter-spacing:0.130px;">santykiais</div>
<div class="a" style="left:846.3px;top:277px;width:6px;height:127.5px;background:#fbfbfb;"></div>
<svg class="a" style="left:846.2px;top:277px;" width="6" height="5" viewBox="0 0 6 5"><path d="M.5 4 3 .8 5.5 4Z" fill="#6a6a6a"/></svg>
<svg class="a" style="left:846.2px;top:399px;" width="6" height="5" viewBox="0 0 6 5"><path d="M.5 .8 3 4.2 5.5 .8Z" fill="#8a8a8a"/></svg>
<div class="a" style="left:847.2px;top:285px;width:4px;height:49px;background:#8f8f8f;border-radius:2px;"></div>
<div class="a" style="left:653px;top:405.3px;width:193px;height:0.8px;background:#f1f1f1;"></div>
<svg class="a" style="left:658.7px;top:410.2px;" width="7" height="8" viewBox="0 0 7 8"><g fill="none" stroke="#333" stroke-width=".8"><path d="M1.2 .4V5.4H3.2M1.2 2H3.2"/><rect x="3.6" y="1" width="2.6" height="2" rx=".5"/><rect x="3.6" y="4.4" width="2.6" height="2" rx=".5"/></g></svg>
<div class="t" style="left:671.50px;top:411px;font-size:6.2px;line-height:7px;color:#333;letter-spacing:0.250px;">Pasirinkti / Sukurti naują</div>
</div>
</body></html>
